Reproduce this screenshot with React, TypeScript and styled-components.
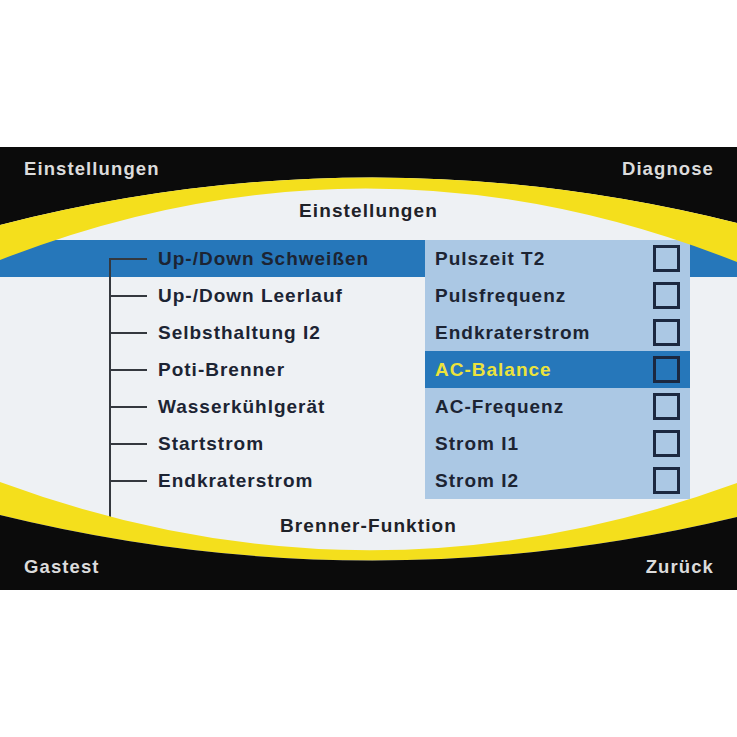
import React from "react";
import styled, { createGlobalStyle } from "styled-components";

const Global = createGlobalStyle`
  html, body { margin: 0; padding: 0; background: #ffffff; }
  body { font-family: "Liberation Sans", Arial, sans-serif; }
`;

const DARK_BLUE = "#2677ba";
const LIGHT_BLUE = "#abc8e4";
const YELLOW = "#f4df1c";
const INK = "#1c2433";

const Page = styled.div`
  width: 737px;
  height: 737px;
  padding-top: 147px;
  box-sizing: border-box;
  background: #ffffff;
`;

const Panel = styled.section`
  position: relative;
  height: 443px;
  background: #eef1f4;
  display: flex;
  flex-direction: column;
  overflow: hidden;
  font-weight: 700;
`;

const Frame = styled.svg`
  position: absolute;
  inset: 0;
  width: 100%;
  height: 100%;
  pointer-events: none;
  z-index: 1;
`;

const Bar = styled.div<{ $bottom?: boolean }>`
  position: relative;
  z-index: 2;
  display: flex;
  justify-content: space-between;
  align-items: center;
  height: ${(p) => (p.$bottom ? 38 : 44)}px;
  padding: 0 23px ${(p) => (p.$bottom ? 9 : 0)}px 24px;
  margin-top: ${(p) => (p.$bottom ? "auto" : "0")};
  box-sizing: border-box;
  color: #dcdcdc;
  font-size: 18.5px;
  letter-spacing: 1.1px;
`;

const Heading = styled.div<{ $h: number; $pb?: number }>`
  display: flex;
  align-items: center;
  justify-content: center;
  height: ${(p) => p.$h}px;
  padding-bottom: ${(p) => p.$pb ?? 0}px;
  box-sizing: border-box;
  color: #1e2228;
  font-size: 19px;
  letter-spacing: 1.1px;
`;

const List = styled.div`
  display: flex;
  flex-direction: column;
`;

const Row = styled.div<{ $active?: boolean }>`
  display: grid;
  grid-template-columns: 425px 265px 1fr;
  height: 37px;
  background: ${(p) => (p.$active ? DARK_BLUE : "transparent")};
`;

const LeftCell = styled.div`
  display: flex;
  align-items: center;
  padding-left: 109px;
`;

const Branch = styled.span<{ $first?: boolean; $last?: boolean }>`
  position: relative;
  align-self: stretch;
  width: 38px;
  flex: none;
  &::before {
    content: "";
    position: absolute;
    left: 0;
    width: 2px;
    top: ${(p) => (p.$first ? "50%" : "0")};
    bottom: ${(p) => (p.$last ? "-22px" : "0")};
    background: #34383e;
  }
  &::after {
    content: "";
    position: absolute;
    left: 0;
    right: 0;
    top: 50%;
    height: 2px;
    margin-top: -1px;
    background: #34383e;
  }
`;

const Label = styled.span<{ $hl?: boolean }>`
  font-size: 19px;
  letter-spacing: 1px;
  white-space: nowrap;
  color: ${(p) => (p.$hl ? "#ece33c" : INK)};
`;

const TreeLabel = styled(Label)`
  margin-left: 11px;
`;

const RightCell = styled.div<{ $active?: boolean }>`
  display: flex;
  align-items: center;
  justify-content: space-between;
  padding: 0 10px;
  background: ${(p) => (p.$active ? DARK_BLUE : LIGHT_BLUE)};
`;

const Check = styled.span`
  width: 27px;
  height: 27px;
  box-sizing: border-box;
  border: 3px solid #1b2840;
`;

const rows = [
  { left: "Up-/Down Schweißen", right: "Pulszeit T2" },
  { left: "Up-/Down Leerlauf", right: "Pulsfrequenz" },
  { left: "Selbsthaltung I2", right: "Endkraterstrom" },
  { left: "Poti-Brenner", right: "AC-Balance" },
  { left: "Wasserkühlgerät", right: "AC-Frequenz" },
  { left: "Startstrom", right: "Strom I1" },
  { left: "Endkraterstrom", right: "Strom I2" },
];

const selectedLeft = 0;
const selectedRight = 3;

export default function App() {
  return (
    <>
      <Global />
      <Page>
        <Panel>
          <Frame viewBox="0 0 737 443" preserveAspectRatio="none">
            <path d="M0,0 H737 V76 Q368,-16 0,78 Z" fill="#0b0b0b" />
            <path d="M0,78 Q368,-16 737,76 V115 Q368,-31 0,113 Z" fill={YELLOW} />
            <path d="M0,335 Q368,471 737,336 V370 Q368,458 0,368 Z" fill={YELLOW} />
            <path d="M0,368 Q368,458 737,370 V443 H0 Z" fill="#0b0b0b" />
          </Frame>
          <Bar>
            <span>Einstellungen</span>
            <span>Diagnose</span>
          </Bar>
          <Heading $h={49} $pb={10}>Einstellungen</Heading>
          <List>
            {rows.map((r, i) => (
              <Row key={r.left} $active={i === selectedLeft}>
                <LeftCell>
                  <Branch $first={i === 0} $last={i === rows.length - 1} />
                  <TreeLabel>{r.left}</TreeLabel>
                </LeftCell>
                <RightCell $active={i === selectedRight}>
                  <Label $hl={i === selectedRight}>{r.right}</Label>
                  <Check />
                </RightCell>
                <span />
              </Row>
            ))}
          </List>
          <Heading $h={53}>Brenner-Funktion</Heading>
          <Bar $bottom>
            <span>Gastest</span>
            <span>Zurück</span>
          </Bar>
        </Panel>
      </Page>
    </>
  );
}
